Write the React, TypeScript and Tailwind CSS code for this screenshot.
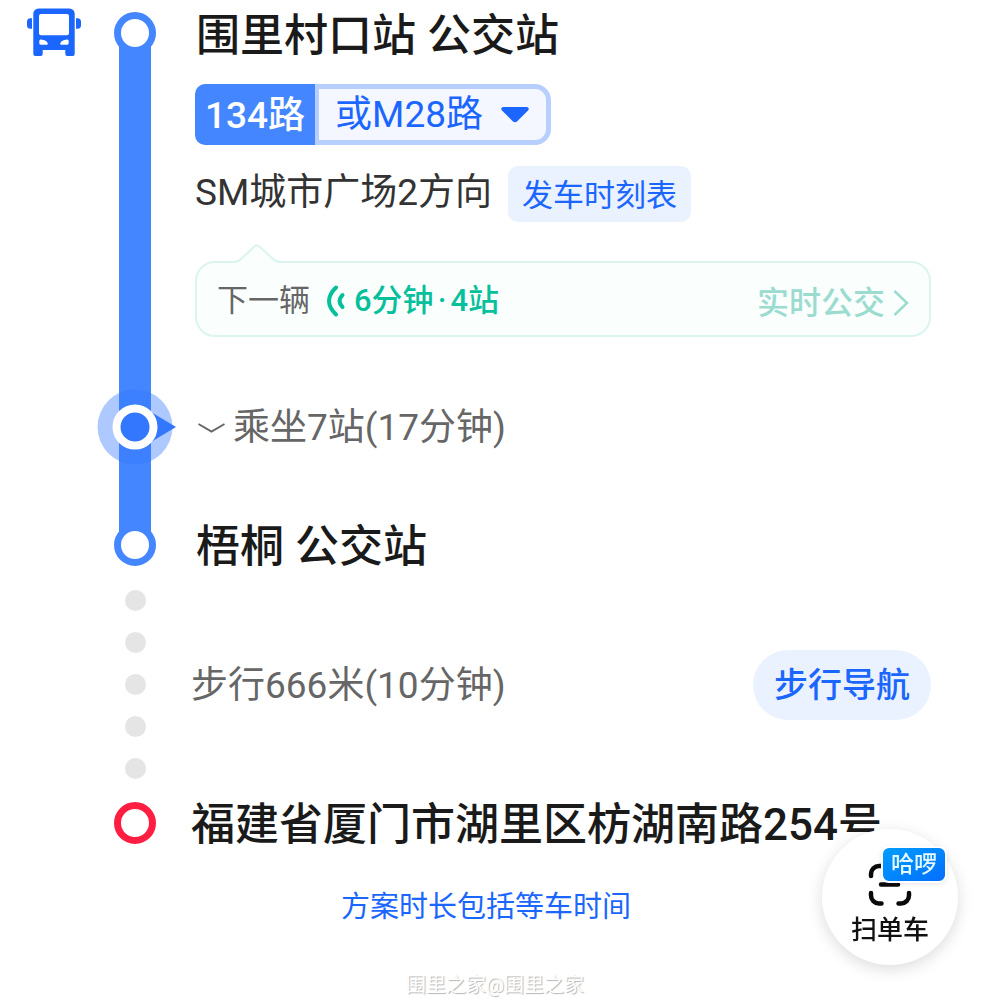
import React from 'react';

const WALK_DOTS = [0, 1, 2, 3, 4];

function BusIcon() {
  return (
    <svg width="54" height="49" viewBox="0 0 54 49" fill="#1b66ff" aria-hidden="true">
      <path
        fillRule="evenodd"
        d="M11.5 .4h31a5.2 5.2 0 0 1 5.2 5.2V46a2 2 0 0 1-2 2h-5.4a2 2 0 0 1-2-2v-4H15.7v4a2 2 0 0 1-2 2H8.3a2 2 0 0 1-2-2V5.600a5.200 5.200 0 0 1 5.200-5.200zM14 6a2 2 0 0 0-2 2v17.200a2 2 0 0 0 2 2h26a2 2 0 0 0 2-2V8a2 2 0 0 0-2-2zM12.300 33q0-1.800 1.800-1.600q5.500.6 6.600 3.800q.5 1.500-1 1.500h-6q-1.400 0-1.400-1.400zM41.700 33q0-1.800-1.800-1.600q-5.500.6-6.600 3.800q-.5 1.500 1 1.500h6q1.400 0 1.400-1.400z"
      />
      <path d="M5 10.300v10.400H3.500A3.500 3.500 0 0 1 0 17.200v-3.400a3.500 3.500 0 0 1 3.500-3.500zM49 10.300v10.400h1.500a3.500 3.500 0 0 0 3.500-3.500v-3.400a3.500 3.500 0 0 0-3.500-3.500z" />
    </svg>
  );
}

function PositionMarker() {
  return (
    <svg
      className="absolute top-1/2 left-1/2 -translate-x-1/2 -translate-y-1/2"
      width="84"
      height="76"
      viewBox="-42 -38 84 76"
      aria-hidden="true"
    >
      <circle r="37.500" fill="#3377ff" fillOpacity=".4" />
      <path d="M16-15L41 0L16 15z" fill="#3377ff" />
      <circle r="18.500" fill="#3377ff" stroke="#fff" strokeWidth="8" />
    </svg>
  );
}

function ScanIcon() {
  return (
    <svg width="44" height="44" viewBox="0 0 44 44" fill="none" stroke="#0a0a0a" strokeWidth="4.500" strokeLinecap="round" aria-hidden="true">
      <path d="M3 13V11a8 8 0 0 1 8-8h2M3 30v2.500a8 8 0 0 0 8 8h2.500M41 30v2.500a8 8 0 0 1-8 8h-2.500M13 21.500h17" />
    </svg>
  );
}

function Ring({ className }: { className: string }) {
  return <span className={`relative z-10 block size-[42px] shrink-0 rounded-full border-7 bg-white ${className}`} />;
}

function Step({ icon, rail, children }: { icon?: React.ReactNode; rail: React.ReactNode; children: React.ReactNode }) {
  return (
    <li className="grid grid-cols-[95px_80px_minmax(0,1fr)]">
      <div className="flex justify-center pt-2 pl-3">{icon}</div>
      <div className="flex flex-col items-center">{rail}</div>
      {children}
    </li>
  );
}

export default function App() {
  return (
    <main className="min-h-screen overflow-x-hidden bg-white font-[Roboto,'Noto_Sans_CJK_SC',sans-serif] text-[#333333]">
      <ol className="pr-[53px]">
        <Step
          icon={<BusIcon />}
          rail={
            <>
              <Ring className="mt-3 border-[#4486ff]" />
              <span className="-mt-2 w-8 flex-1 bg-[#4486ff]" />
            </>
          }
        >
          <div className="pb-[52px] pl-5">
            <h2 className="pl-px text-[44px] leading-[72px] font-medium whitespace-nowrap text-[#1a1a1a]">围里村口站 公交站</h2>

            <div className="mt-3 flex h-[61px] text-[37px] leading-[63px]">
              <span className="rounded-l-[10px] bg-[#4486ff] px-[10px] font-medium whitespace-nowrap text-white">134路</span>
              <button
                type="button"
                className="flex items-center gap-[18px] rounded-r-2xl border-[5px] border-l-4 border-[#b7cfff] bg-[#f4f7ff] pr-[17px] pl-4 whitespace-nowrap text-[#1b66ff]"
              >
                或M28路
                <svg width="28" height="16" viewBox="0 0 28 16" fill="#1b66ff" aria-hidden="true">
                  <path d="M2 0h24q3 1 1 3.500L16.500 14q-2.500 2.500-5 0L1 3.500Q-1 1 2 0z" />
                </svg>
              </button>
            </div>

            <div className="mt-[21px] flex gap-4">
              <p className="text-[37px] leading-[54px] whitespace-nowrap">SM城市广场2方向</p>
              <button type="button" className="h-14 rounded-[10px] bg-[#ebf2ff] px-[14px] pt-1 text-[31px] leading-[52px] whitespace-nowrap text-[#1b66ff]">
                发车时刻表
              </button>
            </div>

            <div className="relative mt-[39px] flex h-[76px] items-center rounded-[20px] border-2 border-[#dcf4f0] bg-[#fafffe] px-5 pt-1">
              <svg className="absolute -top-[19px] left-[37px]" width="46" height="20" viewBox="0 0 46 20" aria-hidden="true">
                <path d="M0 18q4 0 7-3L20 3q3-3 6 0l13 12q3 3 7 3v2H0z" fill="#fafffe" />
                <path d="M0 18q4 0 7-3L20 3q3-3 6 0l13 12q3 3 7 3" fill="none" stroke="#dcf4f0" strokeWidth="2" />
              </svg>
              <span className="text-[31px] whitespace-nowrap text-[#666666]">下一辆</span>
              <svg className="mr-2 ml-4 shrink-0" width="20" height="32" viewBox="0 0 20 32" fill="none" stroke="#08bf9c" strokeLinecap="round" aria-hidden="true">
                <path d="M10 2.500Q-4 16 10 29.500" strokeWidth="4" />
                <path d="M16.500 10Q10.500 16 16.500 22" strokeWidth="4" />
              </svg>
              <span className="text-[31px] font-medium whitespace-nowrap text-[#08bf9c]">
                6分钟<span className="mx-1">·</span>4站
              </span>
              <a href="#realtime" className="ml-auto flex items-center gap-2 pt-1 text-[32px] font-medium whitespace-nowrap text-[#9bdccf]">
                实时公交
                <svg width="16" height="28" viewBox="0 0 16 28" fill="none" stroke="#9bdccf" strokeWidth="2.500" aria-hidden="true">
                  <path d="M1.500 2L14 14L1.500 26" />
                </svg>
              </a>
            </div>
          </div>
        </Step>

        <Step
          rail={
            <span className="relative w-8 flex-1 bg-[#4486ff]">
              <PositionMarker />
            </span>
          }
        >
          <div className="pl-5">
            <button type="button" className="flex h-[75px] items-center gap-2 pt-0.5 text-[37px] whitespace-nowrap text-[#666666]">
              <svg className="ml-[3px]" width="27" height="12" viewBox="0 0 27 12" fill="none" stroke="#666666" strokeWidth="2" aria-hidden="true">
                <path d="M.5 2L13.500 9.500L26.500 2" />
              </svg>
              乘坐7站(17分钟)
            </button>
          </div>
        </Step>

        <Step
          rail={
            <>
              <span className="-mb-2 w-8 flex-1 bg-[#4486ff]" />
              <Ring className="mb-[2px] border-[#4486ff]" />
            </>
          }
        >
          <h2 className="pt-[62px] pl-[21px] text-[44px] leading-[42px] font-medium whitespace-nowrap text-[#1a1a1a]">梧桐 公交站</h2>
        </Step>

        <Step
          rail={
            <div className="flex flex-col gap-[21px] pt-[22px] pb-[23px]">
              {WALK_DOTS.map((dot) => (
                <span key={dot} className="size-[21px] rounded-full bg-[#e5e5e5]" />
              ))}
            </div>
          }
        >
          <div className="flex items-center justify-between pl-4">
            <p className="pt-0.5 text-[37px] whitespace-nowrap text-[#666666]">步行666米(10分钟)</p>
            <button type="button" className="h-[70px] rounded-full bg-[#ebf2ff] px-[21px] text-[34px] font-medium whitespace-nowrap text-[#1b66ff]">
              步行导航
            </button>
          </div>
        </Step>

        <Step rail={<Ring className="border-[#ff1d42]" />}>
          <h2 className="pl-4 text-[44px] leading-[46px] font-medium whitespace-nowrap text-[#1a1a1a]">福建省厦门市湖里区枋湖南路254号</h2>
        </Step>
      </ol>

      <p className="mt-[38px] pr-3 text-center text-[29px] leading-[42px] text-[#1b66ff]">方案时长包括等车时间</p>
      <footer className="mt-[42px] pl-1.5 text-center text-xl leading-[30px] text-white [text-shadow:1px_1px_1px_#b5b5b5]">
        围里之家@围里之家
      </footer>

      <button
        type="button"
        className="fixed right-[26px] bottom-[35px] flex size-[136px] flex-col items-center rounded-full bg-white pt-[34px] text-[#111111] shadow-[0_4px_16px_rgba(0,0,0,0.14)]"
      >
        <ScanIcon />
        <span className="mt-1 text-[26px] leading-[38px] font-medium">扫单车</span>
        <span className="absolute top-[17px] right-[11px] rounded-lg border-2 border-white bg-linear-to-br from-[#009dff] to-[#0b6dff] px-2 text-[23px] leading-[33px] font-medium text-[#e3f8ff] shadow-[0_1px_4px_rgba(0,0,0,0.1)]">
          哈啰
        </span>
      </button>
    </main>
  );
}
